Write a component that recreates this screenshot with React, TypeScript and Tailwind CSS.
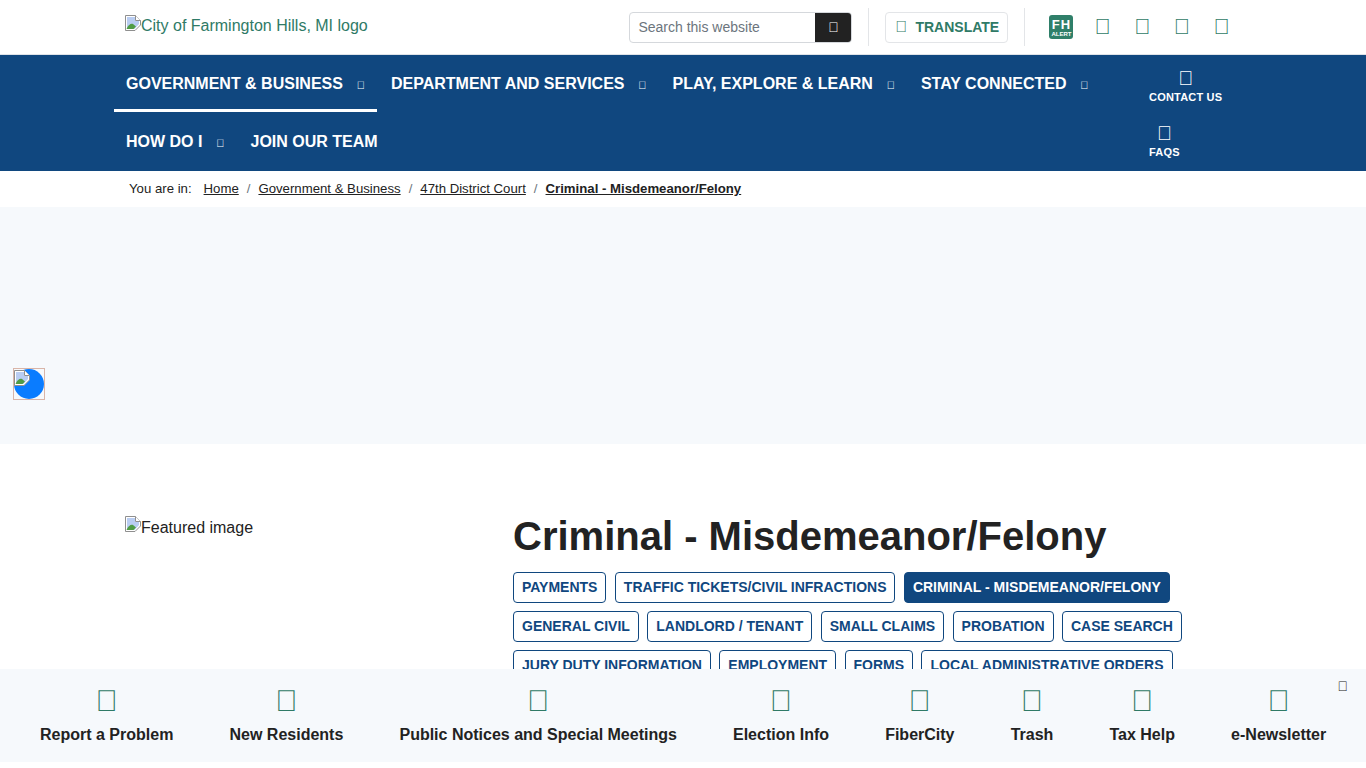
const navRowOne = [
  { label: "GOVERNMENT & BUSINESS", active: true },
  { label: "DEPARTMENT AND SERVICES", active: false },
  { label: "PLAY, EXPLORE & LEARN", active: false },
  { label: "STAY CONNECTED", active: false },
];

const tabRows = [
  ["PAYMENTS", "TRAFFIC TICKETS/CIVIL INFRACTIONS", "CRIMINAL - MISDEMEANOR/FELONY"],
  ["GENERAL CIVIL", "LANDLORD / TENANT", "SMALL CLAIMS", "PROBATION", "CASE SEARCH"],
  ["JURY DUTY INFORMATION", "EMPLOYMENT", "FORMS", "LOCAL ADMINISTRATIVE ORDERS"],
];

const quickLinks = [
  "Report a Problem",
  "New Residents",
  "Public Notices and Special Meetings",
  "Election Info",
  "FiberCity",
  "Trash",
  "Tax Help",
  "e-Newsletter",
];

// icon font is missing in the reference, so every icon is an empty glyph box
function Tofu({ className }: { className?: string }) {
  return <span className={className}>{"\uf002"}</span>;
}

function BrokenImage() {
  return (
    <svg width="16" height="16" viewBox="0 0 16 16" className="inline-block shrink-0">
      <path d="M0.5 0.5H10.5L15.5 5.5V10L10 15.5H0.5Z" fill="#fff" stroke="#8f8f8f" />
      <path d="M2 2H10V6H14V9L9.5 14H2Z" fill="#b9cdf2" />
      <path d="M1.5 14C3 10 6 8 8 9L11 11.5L8.5 14Z" fill="#4f9c45" />
      <path d="M10.5 0.5V5.5H15.5" fill="#fff" stroke="#8f8f8f" />
    </svg>
  );
}

function NavItem({ label, active, caret = true }: { label: string; active?: boolean; caret?: boolean }) {
  return (
    <a
      className={`flex h-[57px] items-center whitespace-nowrap px-3 pt-1 mr-[2px] border-b-[3px] ${
        active ? "border-white" : "border-transparent"
      }`}
    >
      <span className="text-base font-bold text-white">{label}</span>
      {caret && <Tofu className="ml-[13.8px] mt-[3px] text-[11px] text-white" />}
    </a>
  );
}

export default function App() {
  return (
    <div className="relative h-[768px] overflow-hidden bg-white font-['Liberation_Sans',Arial,sans-serif] text-[#222]">
      <header className="flex h-[55px] items-center border-b border-[#dfe3e8] pl-[125px] pr-[136px]">
        <a className="mb-[2px] flex items-start whitespace-nowrap text-base text-[#2f7a66]">
          <BrokenImage />
          <span className="leading-[22px]">City of Farmington Hills, MI logo</span>
        </a>
        <div className="ml-auto flex h-[31px] w-[223px] shrink-0 overflow-hidden rounded-[4px] border border-[#d5d8dc]">
          <span className="flex-1 pl-2 text-sm leading-[29px] text-[#6c757d]">Search this website</span>
          <span className="flex w-9 items-center justify-center bg-[#222] text-sm text-white">
            <Tofu />
          </span>
        </div>
        <div className="mx-4 h-[38px] w-px shrink-0 bg-[#e3e5e8]" />
        <div className="flex h-[31px] w-[123px] shrink-0 items-center rounded-[4px] border border-[#e3e5e8] pl-[9px]">
          <Tofu className="text-base text-[#2f7a66]" />
          <span className="ml-2 text-sm font-bold text-[#2f7a66]">TRANSLATE</span>
        </div>
        <div className="mx-4 h-[38px] w-px shrink-0 bg-[#e3e5e8]" />
        <div className="ml-2 flex h-6 w-6 shrink-0 flex-col items-center justify-center rounded-[3px] bg-[#2f7f69] font-bold leading-none text-white">
          <span className="text-[13px] tracking-[1px]">FH</span>
          <span className="text-[6px]">ALERT</span>
        </div>
        <div className="ml-[21px] flex shrink-0 gap-[23.2px]">
          {[0, 1, 2, 3].map((i) => (
            <Tofu key={i} className="text-[22px] leading-none text-[#2f7a66]" />
          ))}
        </div>
      </header>

      <nav className="flex h-[116px] bg-[#10477f] pl-[114px]">
        <div className="flex w-[1000px] flex-col">
          <div className="flex">
            {navRowOne.map((item) => (
              <NavItem key={item.label} label={item.label} active={item.active} />
            ))}
          </div>
          <div className="mt-px flex">
            <NavItem label="HOW DO I" />
            <NavItem label="JOIN OUR TEAM" caret={false} />
          </div>
        </div>
        <div className="ml-[35px] flex flex-col items-start pt-[15px]">
          <a className="flex flex-col items-center text-white">
            <Tofu className="text-[20px] leading-4" />
            <span className="mt-[3px] text-[11px] font-bold tracking-[0.2px]">CONTACT US</span>
          </a>
          <a className="mt-[19px] flex flex-col items-center text-white">
            <Tofu className="text-[20px] leading-4" />
            <span className="mt-[3px] text-[11px] font-bold tracking-[0.2px]">FAQS</span>
          </a>
        </div>
      </nav>

      <div className="flex h-9 items-center pl-[129px] text-[13.2px] text-[#222]">
        <span className="mr-3">You are in:</span>
        <a className="underline">Home</a>
        <span className="mx-2 text-[#6c757d]">/</span>
        <a className="underline">Government &amp; Business</a>
        <span className="mx-2 text-[#6c757d]">/</span>
        <a className="underline">47th District Court</a>
        <span className="mx-2 text-[#6c757d]">/</span>
        <a className="font-bold underline">Criminal - Misdemeanor/Felony</a>
      </div>

      <div className="h-[237px] bg-[#f6f9fc]" />

      <main className="flex pl-[125px] pt-[72px]">
        <div className="flex w-[388px] items-start">
          <BrokenImage />
          <span className="text-base leading-6">Featured image</span>
        </div>
        <div className="w-[680px]">
          <h1 className="text-[40px] font-bold leading-[40px]">Criminal - Misdemeanor/Felony</h1>
          <div className="mt-4 flex flex-col gap-2">
            {tabRows.map((row, i) => (
              <div key={i} className="flex gap-[8.4px]">
                {row.map((tab) => (
                  <a
                    key={tab}
                    className={`flex h-[31px] items-center rounded-[4px] border border-[#10477f] px-2 pb-[2px] text-sm font-bold ${
                      tab.startsWith("CRIMINAL") ? "bg-[#10477f] text-white" : "text-[#10477f]"
                    }`}
                  >
                    {tab}
                  </a>
                ))}
              </div>
            ))}
          </div>
        </div>
      </main>

      {/* chat launcher floating over the hero band */}
      <div className="absolute left-[13px] top-[368px] h-8 w-8 border border-[#d9b5a8]">
        <div className="h-full w-full rounded-full bg-[#0a7cff] leading-none">
          <BrokenImage />
        </div>
      </div>

      <div className="absolute bottom-[6px] left-0 right-0 flex h-[93px] gap-[56.15px] bg-[#f6f9fc] pl-10 pt-[19px]">
        {quickLinks.map((link) => (
          <a key={link} className="flex flex-col items-center">
            <Tofu className="text-[30px] leading-[26px] text-[#2f7a66]" />
            <span className="mt-[9px] text-base font-bold">{link}</span>
          </a>
        ))}
        <Tofu className="absolute right-[18px] top-[7px] text-sm text-[#222]" />
      </div>
    </div>
  );
}
